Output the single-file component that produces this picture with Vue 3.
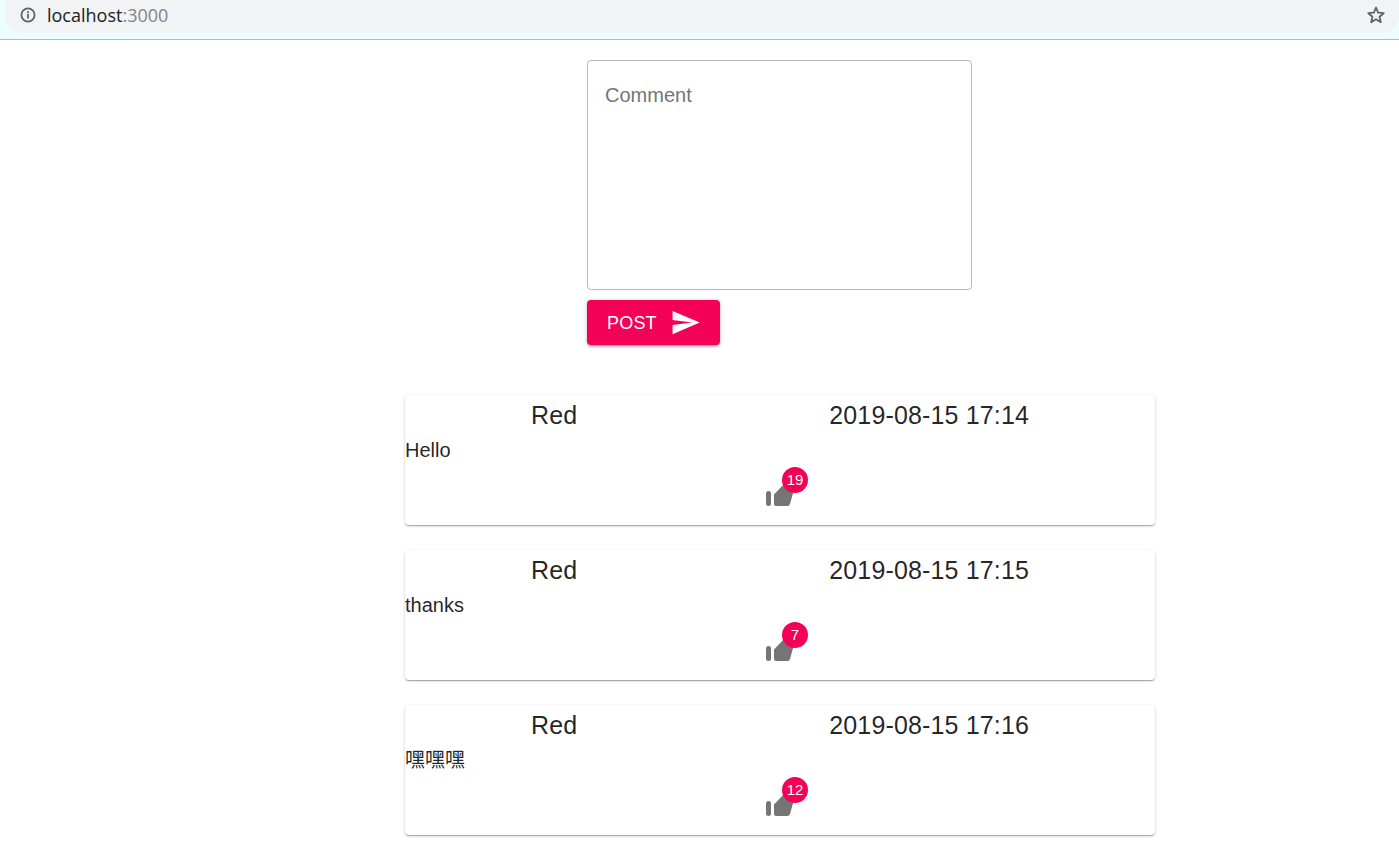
<script setup>
const comments = [
  { id: 1, name: 'Red', time: '2019-08-15 17:14', text: 'Hello', likes: 19 },
  { id: 2, name: 'Red', time: '2019-08-15 17:15', text: 'thanks', likes: 7 },
  { id: 3, name: 'Red', time: '2019-08-15 17:16', text: '嘿嘿嘿', likes: 12 }
]
</script>

<template>
  <div class="page">
    <div class="browser-bar">
      <div class="address">
        <svg class="info" width="16" height="16" viewBox="0 0 16 16">
          <circle cx="8" cy="8" r="6.6" fill="none" stroke="#5f6368" stroke-width="1.8" />
          <rect x="7.1" y="7" width="1.8" height="4.6" fill="#5f6368" />
          <rect x="7.1" y="4.3" width="1.8" height="1.8" fill="#5f6368" />
        </svg>
        <span class="host">localhost<span class="port">:3000</span></span>
        <svg class="star" width="20" height="20" viewBox="0 0 20 20">
          <path d="M10 2.6l2.2 5.1 5.5.5-4.2 3.6 1.3 5.4L10 14.3l-4.8 2.9 1.3-5.4-4.2-3.6 5.5-.5z" fill="none" stroke="#5f6368" stroke-width="1.8" stroke-linejoin="round" />
        </svg>
      </div>
    </div>

    <div class="content">
      <form class="post-form" @submit.prevent>
        <div class="comment-box">
          <span class="placeholder">Comment</span>
        </div>
        <button class="post-btn" type="submit">
          <span>POST</span>
          <svg width="31" height="31" viewBox="0 0 24 24">
            <path d="M2.01 21L23 12 2.01 3 2 10l15 2-15 2z" fill="#fff" />
          </svg>
        </button>
      </form>

      <div class="card" v-for="c in comments" :key="c.id">
        <div class="card-head">
          <span>{{ c.name }}</span>
          <span>{{ c.time }}</span>
        </div>
        <div class="card-text">{{ c.text }}</div>
        <div class="card-actions">
          <div class="like">
            <svg width="30" height="30" viewBox="0 0 30 30">
              <rect x="1" y="15" width="5" height="15" rx="2.5" fill="#757575" />
              <path d="M9 18.5L20 7h8a2 2 0 0 1 2 3l-5 18a3 3 0 0 1-3 2H11a2 2 0 0 1-2-2z" fill="#757575" />
            </svg>
            <span class="badge">{{ c.likes }}</span>
          </div>
        </div>
      </div>
    </div>
  </div>
</template>

<style>
html, body {
  margin: 0;
  background: #fff;
}
</style>

<style scoped>
.page {
  font-family: "Liberation Sans", "Noto Sans CJK SC", Arial, sans-serif;
  color: rgba(0, 0, 0, 0.87);
}

.browser-bar {
  height: 39px;
  background: #ebfdfd;
  border-bottom: 1px solid #aebcbc;
}

.address {
  display: flex;
  align-items: center;
  height: 33px;
  box-sizing: border-box;
  margin-left: 5px;
  padding: 0 13px 3px 15px;
  background: #f1f3f4;
  border-radius: 0 0 17px 17px;
}

.info {
  flex: none;
}

.host {
  margin-left: 11px;
  font-size: 18px;
  font-family: "Open Sans", "Liberation Sans", sans-serif;
  color: #202124;
}

.port {
  color: #80868b;
}

.star {
  margin-left: auto;
}

.content {
  width: 750px;
  margin-left: 405px;
  padding-top: 20px;
}

.post-form {
  width: 385px;
  margin: 0 0 50px 182px;
}

.comment-box {
  height: 230px;
  box-sizing: border-box;
  padding: 23px 17px;
  border: 1px solid rgba(0, 0, 0, 0.27);
  border-radius: 4px;
}

.placeholder {
  font-size: 20px;
  line-height: 23px;
  color: #757575;
}

.post-btn {
  display: flex;
  align-items: center;
  gap: 13px;
  width: 133px;
  height: 45px;
  margin-top: 10px;
  padding: 2px 0 0 20px;
  border: none;
  border-radius: 4px;
  background: #f50057;
  color: #fff;
  font-family: inherit;
  font-size: 18px;
  letter-spacing: 0.2px;
  box-shadow: 0 1px 5px rgba(0, 0, 0, 0.2), 0 2px 2px rgba(0, 0, 0, 0.14), 0 3px 1px -2px rgba(0, 0, 0, 0.12);
}

.post-btn svg {
  margin-top: -2px;
}

.card {
  height: 130px;
  margin-bottom: 25px;
  border-radius: 4px;
  background: #fff;
  box-shadow: 0 1px 3px rgba(0, 0, 0, 0.2), 0 1px 1px rgba(0, 0, 0, 0.14), 0 2px 1px -1px rgba(0, 0, 0, 0.12);
}

.card-head {
  display: flex;
  justify-content: space-around;
  padding-top: 6px;
  font-size: 25px;
  line-height: 28px;
  letter-spacing: 0.15px;
}

.card-text {
  margin-top: 9px;
  height: 24px;
  font-size: 20px;
  line-height: 24px;
}

.card-actions {
  display: flex;
  justify-content: center;
  padding-top: 14px;
}

.like {
  position: relative;
  width: 30px;
  height: 30px;
}

.like svg {
  display: block;
}

.badge {
  position: absolute;
  top: -9px;
  left: 17px;
  min-width: 26px;
  height: 26px;
  padding: 0 1px;
  box-sizing: border-box;
  border-radius: 13px;
  background: #f50057;
  color: #fff;
  font-size: 15px;
  line-height: 26px;
  text-align: center;
}
</style>
